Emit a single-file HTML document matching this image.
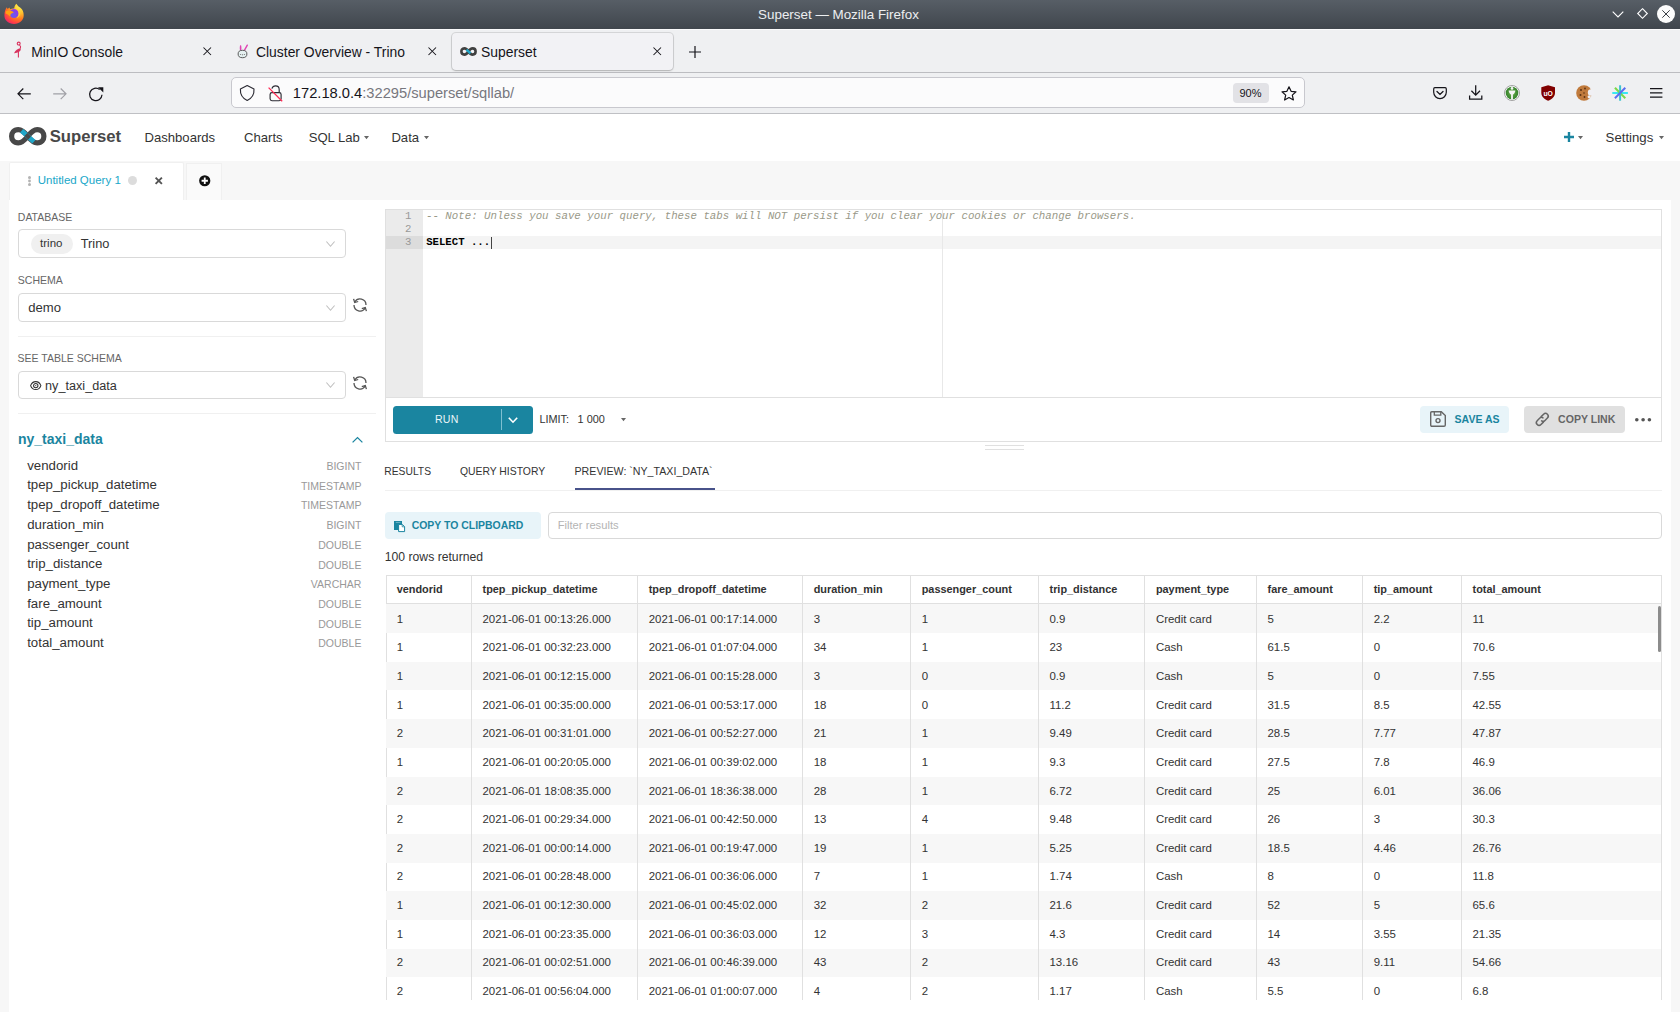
<!DOCTYPE html>
<html><head><meta charset="utf-8">
<style>
*{margin:0;padding:0;box-sizing:border-box}
html,body{width:1680px;height:1012px;overflow:hidden;background:#f7f7f7;font-family:"Liberation Sans",sans-serif;color:#333}
.t{position:absolute;white-space:nowrap}
.b{position:absolute}
svg{position:absolute;overflow:visible}
</style></head><body>
<div class="b" style="left:0px;top:0px;width:1680px;height:28.6px;background:linear-gradient(#575e66,#40464d);"></div>
<div class="t " style="left:758.10px;top:7.66px;font-size:13.4px;line-height:13.4px;color:#eceef0;">Superset — Mozilla Firefox</div>
<svg style="left:4px;top:4px" width="20" height="20"><defs><radialGradient id="ffo" cx="80%" cy="10%" r="110%"><stop offset="0" stop-color="#fff44f"/><stop offset="0.35" stop-color="#ffbd2e"/><stop offset="0.6" stop-color="#ff7a1f"/><stop offset="0.82" stop-color="#ff3b4a"/><stop offset="1" stop-color="#e01f7e"/></radialGradient><radialGradient id="ffp" cx="40%" cy="70%" r="80%"><stop offset="0" stop-color="#6a5cf0"/><stop offset="0.7" stop-color="#8a3fe8"/><stop offset="1" stop-color="#b833e1"/></radialGradient></defs>
<path d="M0.4 11.5 C0.4 7 1.8 4.8 2.8 3.3 L3.6 5 L5.4 3.6 L6.2 5.2 C7.5 4.6 9 4.4 10.3 4.6 C10.2 3 11 1.2 12.4 -0.2 C13.5 1.8 15 2.8 16.4 3.8 C18.8 5.6 19.7 8.2 19.7 11.2 C19.7 16.5 15.4 19.9 10 19.9 C4.6 19.9 0.4 16.5 0.4 11.5 Z" fill="url(#ffo)"/>
<circle cx="10.1" cy="9.5" r="4.6" fill="url(#ffp)"/><path d="M11.6 5.3 C13.5 6 14.8 7.8 14.6 10 C14.4 12 13.2 13.4 12 14 C14.5 13.8 16.5 11.5 16.3 8.8 C16.1 6.8 14.5 5.2 11.6 5.3Z" fill="#ffcf3a"/>
<path d="M1.8 7.2 C3.6 6.3 6.2 6.4 8.2 7.3 L9.9 8.5 L7.6 9.4 C6.5 10 6.2 11.3 6.5 12.6 C5 11.6 3.4 10.2 1.5 9.6 Z" fill="#ffa012"/></svg>
<svg style="left:1612px;top:11px" width="12" height="7"><path d="M0.7 0.7 L6 6 L11.3 0.7" stroke="#fff" stroke-width="1.1" fill="none"/></svg>
<svg style="left:1636.5px;top:8px" width="11" height="11"><path d="M5.5 0.7 L10.3 5.5 L5.5 10.3 L0.7 5.5 Z" stroke="#fff" stroke-width="1.1" fill="none"/></svg>
<div class="b" style="left:1657px;top:5px;width:18px;height:18px;border-radius:50%;background:#fcfcfc"></div>
<svg style="left:1662px;top:10px" width="8" height="8"><path d="M0.3 0.3 L7.7 7.7 M7.7 0.3 L0.3 7.7" stroke="#3a3f45" stroke-width="1"/></svg>
<div class="b" style="left:0px;top:28.6px;width:1680px;height:43.4px;background:#eff0f2;"></div>
<div class="b" style="left:0px;top:28.6px;width:1680px;height:1px;background:#fafafb;"></div>
<div class="b" style="left:0px;top:72px;width:1680px;height:1px;background:#bcbdc1;"></div>
<svg style="left:13px;top:41.3px" width="10" height="17"><circle cx="5.7" cy="2.6" r="1.45" stroke="#d8345f" stroke-width="1.1" fill="none"/><path d="M6.4 3.9 C7.6 5 8 6 7.4 7.2" stroke="#d8345f" stroke-width="1.1" fill="none"/><path d="M1 12.2 C2.3 9.6 4.8 7.6 7.6 7 C8.2 8.8 7.2 10.3 5.8 11.1 C4.3 11.9 2.6 12.3 1 12.2Z" fill="#d8345f"/><path d="M5.4 10.6 V16.6" stroke="#d8345f" stroke-width="1.1"/></svg>
<div class="t " style="left:31.20px;top:46.33px;font-size:13.9px;line-height:13.9px;color:#15141a;">MinIO Console</div>
<svg style="left:202.7px;top:47px" width="8.5" height="8.5"><path d="M0.5 0.5 L8 8 M8 0.5 L0.5 8" stroke="#15141a" stroke-width="1.05"/></svg>
<svg style="left:237px;top:44px" width="11" height="14"><ellipse cx="3.6" cy="3.9" rx="0.85" ry="3" fill="#e043b4"/><path d="M10.3 1.2 L7.4 6.3" stroke="#e043b4" stroke-width="1.4" stroke-linecap="round"/><ellipse cx="5.5" cy="10" rx="4.4" ry="3.7" fill="#e4f0f0" stroke="#4a4a4a" stroke-width="0.9"/><circle cx="3.7" cy="10.5" r="0.5" fill="#555"/><circle cx="5.5" cy="10.8" r="0.5" fill="#555"/><circle cx="7.3" cy="10.5" r="0.5" fill="#555"/></svg>
<div class="t " style="left:256.00px;top:46.33px;font-size:13.9px;line-height:13.9px;color:#15141a;">Cluster Overview - Trino</div>
<svg style="left:427.5px;top:47px" width="8.5" height="8.5"><path d="M0.5 0.5 L8 8 M8 0.5 L0.5 8" stroke="#15141a" stroke-width="1.05"/></svg>
<div class="b" style="left:452px;top:32.5px;width:221px;height:37px;background:#f2f2f5;border-radius:4px;box-shadow:0 0 0 1px rgba(0,0,0,0.10),0 1px 2px rgba(0,0,0,0.18)"></div>
<svg style="left:459.7px;top:47px" width="17" height="9"><path d="M4.4 1.4 C1.8 1.4 1.4 3.2 1.4 4.5 C1.4 5.8 1.8 7.6 4.4 7.6 C6.6 7.6 8.5 4.5 8.5 4.5 C8.5 4.5 10.4 1.4 12.6 1.4 C15.2 1.4 15.6 3.2 15.6 4.5 C15.6 5.8 15.2 7.6 12.6 7.6 C10.4 7.6 8.5 4.5 8.5 4.5 C8.5 4.5 6.6 1.4 4.4 1.4Z" stroke="#404040" stroke-width="2.6" fill="none"/><path d="M6.5 2.6 L10.5 6.4" stroke="#20a7c9" stroke-width="2.4"/></svg>
<div class="t " style="left:481.00px;top:46.33px;font-size:13.9px;line-height:13.9px;color:#15141a;">Superset</div>
<svg style="left:652.6px;top:47px" width="8.5" height="8.5"><path d="M0.5 0.5 L8 8 M8 0.5 L0.5 8" stroke="#15141a" stroke-width="1.05"/></svg>
<svg style="left:688.5px;top:45.8px" width="12" height="12"><path d="M6 0 V12 M0 6 H12" stroke="#15141a" stroke-width="1.2"/></svg>
<div class="b" style="left:0px;top:73px;width:1680px;height:40px;background:#eff0f2;"></div>
<div class="b" style="left:0px;top:113px;width:1680px;height:1px;background:#bfc0c4;"></div>
<svg style="left:17.2px;top:87.8px" width="14" height="11.6"><path d="M13.8 5.8 H1 M6.3 0.5 L1 5.8 L6.3 11.1" stroke="#15141a" stroke-width="1.2" fill="none"/></svg>
<svg style="left:53px;top:87.8px" width="14" height="11.6"><path d="M0.2 5.8 H13 M7.7 0.5 L13 5.8 L7.7 11.1" stroke="#a0a0a6" stroke-width="1.2" fill="none"/></svg>
<svg style="left:88.7px;top:87.2px" width="14.5" height="14"><path d="M13 7.8 A6.2 6.2 0 1 1 10.7 2.6" stroke="#15141a" stroke-width="1.25" fill="none"/><path d="M9 0.2 L14.3 0.2 L14.3 5.5 Z" fill="#15141a"/></svg>
<div class="b" style="left:231px;top:77.3px;width:1074px;height:31.2px;background:#fbfbfc;border:1px solid #c8c8ce;border-radius:5px"></div>
<svg style="left:239.6px;top:85px" width="15" height="16"><path d="M7.2 0.6 L14 3.9 C14.3 8.5 12.5 13 7.2 15.5 C1.9 13 0.1 8.5 0.4 3.9 Z" stroke="#2b2a33" stroke-width="1.15" fill="none" stroke-linejoin="round"/></svg>
<svg style="left:267.5px;top:84.5px" width="15" height="17"><path d="M3.9 3.6 C4.6 1.6 6 0.9 7.5 0.9 C9.9 0.9 11.2 2.7 11.2 4.8 V7.6" stroke="#2b2a33" stroke-width="1.15" fill="none"/><rect x="2.1" y="7.6" width="11" height="8.1" rx="1.9" stroke="#2b2a33" stroke-width="1.15" fill="none"/><path d="M0.6 2.6 L14.2 16.2" stroke="#ff2a55" stroke-width="1.3"/></svg>
<div class="t " style="left:292.85px;top:85.66px;font-size:14.7px;line-height:14.7px;color:#15141a;">172.18.0.4<span style="color:#77777e">:32295/superset/sqllab/</span></div>
<div class="b" style="left:1233.2px;top:83px;width:35.6px;height:20px;background:#e2e2e6;border-radius:4px"></div>
<div class="t " style="left:1239.50px;top:88.49px;font-size:11px;line-height:11px;color:#15141a;">90%</div>
<svg style="left:1281px;top:85.6px" width="16" height="15"><path d="M8 0.8 L10.1 5.3 L15 5.8 L11.3 9.1 L12.4 14 L8 11.5 L3.6 14 L4.7 9.1 L1 5.8 L5.9 5.3 Z" stroke="#15141a" stroke-width="1.2" fill="none" stroke-linejoin="round"/></svg>
<svg style="left:1433px;top:86.8px" width="14" height="12.4"><path d="M1.9 0.7 H12.1 Q13.3 0.7 13.3 1.9 V5.3 A6.3 6.3 0 0 1 0.7 5.3 V1.9 Q0.7 0.7 1.9 0.7Z" stroke="#15141a" stroke-width="1.2" fill="none"/><path d="M4 4.5 L7 7.4 L10 4.5" stroke="#15141a" stroke-width="1.3" fill="none" stroke-linecap="round"/></svg>
<svg style="left:1468.8px;top:85px" width="13.4" height="15"><path d="M6.7 0.3 V10 M2.4 5.8 L6.7 10.1 L11 5.8" stroke="#15141a" stroke-width="1.25" fill="none"/><path d="M0.6 10.5 V14.2 H12.8 V10.5" stroke="#15141a" stroke-width="1.25" fill="none"/></svg>
<svg style="left:1504px;top:85px" width="16" height="16"><defs><radialGradient id="gk" cx="50%" cy="50%" r="55%"><stop offset="0" stop-color="#6bb04a"/><stop offset="1" stop-color="#2f7d2a"/></radialGradient></defs><circle cx="8" cy="8" r="7.5" fill="#fff" stroke="#8a8a8a" stroke-width="0.8"/><circle cx="8" cy="8" r="6.3" fill="url(#gk)"/><circle cx="8" cy="3.4" r="1.3" fill="#f4f4f4"/><path d="M4.6 5.4 H11.4 C11.2 7.8 9.8 9 8.9 9.6 V14.2 H7.1 V9.6 C6.2 9 4.8 7.8 4.6 5.4Z" fill="#f4f4f4"/></svg>
<svg style="left:1540.7px;top:85px" width="14.3" height="15.8"><path d="M7.15 0.3 L14 2.2 V8 C14 11.8 10.6 14.4 7.15 15.7 C3.7 14.4 0.3 11.8 0.3 8 V2.2 Z" fill="#800000"/><text x="7.2" y="10.6" font-size="6.8" font-weight="bold" fill="#fff" text-anchor="middle" font-family="Liberation Sans">uO</text></svg>
<svg style="left:1575.6px;top:85px" width="16.2" height="15.8"><circle cx="8" cy="8" r="7.8" fill="#c07a3c"/><circle cx="15" cy="7.5" r="3.2" fill="#f0f0f4"/><circle cx="13.2" cy="11.8" r="1.6" fill="#f0f0f4"/><circle cx="5" cy="5" r="1" fill="#5a3214"/><circle cx="9" cy="3.5" r="0.9" fill="#5a3214"/><circle cx="4.5" cy="10" r="1" fill="#5a3214"/><circle cx="8.5" cy="12" r="0.9" fill="#5a3214"/><circle cx="8" cy="8" r="0.8" fill="#5a3214"/></svg>
<svg style="left:1612px;top:85px" width="16.2" height="16"><path d="M0.3 8 H15.9" stroke="#2ee6f2" stroke-width="1.9"/><path d="M2.9 2.8 L13.3 13.2" stroke="#7ad94a" stroke-width="2"/><path d="M8.1 0.3 V15.7" stroke="#3cc3cf" stroke-width="2"/><path d="M13.3 2.8 L2.9 13.2" stroke="#5a6ef0" stroke-width="2"/></svg>
<svg style="left:1650px;top:87.6px" width="12.4" height="9.8"><path d="M0 0.7 H12.4 M0 4.9 H12.4 M0 9.1 H12.4" stroke="#15141a" stroke-width="1.3"/></svg>
<div class="b" style="left:0px;top:114px;width:1680px;height:47px;background:#fff;"></div>
<svg style="left:9px;top:127px" width="37.5" height="18.5"><path d="M9.3 2.6 C4.6 2.6 2.6 5.8 2.6 9.25 C2.6 12.7 4.6 15.9 9.3 15.9 C13.6 15.9 16.5 12.2 18.75 9.25 C21 6.3 23.9 2.6 28.2 2.6 C32.9 2.6 34.9 5.8 34.9 9.25 C34.9 12.7 32.9 15.9 28.2 15.9 C23.9 15.9 21 12.2 18.75 9.25 C16.5 6.3 13.6 2.6 9.3 2.6 Z" stroke="#484848" stroke-width="5.2" fill="none"/><path d="M12.6 3.8 L18.75 9.25 L24.9 14.7" stroke="#20a7c9" stroke-width="4.8" fill="none"/><path d="M17.3 10.8 L20.2 7.7" stroke="#484848" stroke-width="5" fill="none"/></svg>
<div class="t " style="left:49.70px;top:129.26px;font-size:16.7px;line-height:16.7px;color:#484848;font-weight:bold;">Superset</div>
<div class="t " style="left:144.50px;top:131.31px;font-size:13.1px;line-height:13.1px;color:#333;">Dashboards</div>
<div class="t " style="left:244.10px;top:131.31px;font-size:13.1px;line-height:13.1px;color:#333;">Charts</div>
<div class="t " style="left:308.70px;top:131.31px;font-size:13.1px;line-height:13.1px;color:#333;">SQL Lab</div>
<div class="t " style="left:391.40px;top:131.31px;font-size:13.1px;line-height:13.1px;color:#333;">Data</div>
<svg style="left:364.4px;top:136.2px" width="5" height="3.2"><path d="M0 0 H5 L2.5 3.2Z" fill="#666"/></svg>
<svg style="left:424.3px;top:136.2px" width="5" height="3.2"><path d="M0 0 H5 L2.5 3.2Z" fill="#666"/></svg>
<svg style="left:1564px;top:132px" width="10" height="10"><path d="M5 0 V10 M0 5 H10" stroke="#1a85a0" stroke-width="2.4"/></svg>
<svg style="left:1578px;top:136.2px" width="5" height="3.2"><path d="M0 0 H5 L2.5 3.2Z" fill="#666"/></svg>
<div class="t " style="left:1605.60px;top:131.23px;font-size:13.2px;line-height:13.2px;color:#333;">Settings</div>
<svg style="left:1659px;top:136.2px" width="5" height="3.2"><path d="M0 0 H5 L2.5 3.2Z" fill="#666"/></svg>
<div class="b" style="left:9px;top:162px;width:174.5px;height:38px;background:#fff;border:1px solid #f0f0f0;border-bottom:none;border-radius:2px 2px 0 0"></div>
<svg style="left:27px;top:175.6px" width="4" height="10"><circle cx="2.5" cy="1.5" r="1.5" fill="#b3b3b3"/><circle cx="2.5" cy="5" r="1.4" fill="#b3b3b3"/><circle cx="2.5" cy="8.5" r="1.5" fill="#b3b3b3"/></svg>
<div class="t " style="left:37.70px;top:174.87px;font-size:11.5px;line-height:11.5px;color:#20a7c9;">Untitled Query 1</div>
<div class="b" style="left:128px;top:176px;width:9px;height:9px;border-radius:50%;background:#dcdcdc"></div>
<svg style="left:155px;top:177px" width="7.5" height="7.5"><path d="M0.6 0.6 L6.9 6.9 M6.9 0.6 L0.6 6.9" stroke="#555" stroke-width="1.9"/></svg>
<div class="b" style="left:186px;top:162.8px;width:35.5px;height:37.2px;background:#fafafa;border:1px solid #f0f0f0;border-bottom:none"></div>
<svg style="left:198.5px;top:174.5px" width="11.5" height="11.5"><circle cx="5.75" cy="5.75" r="5.6" fill="#111"/><path d="M5.75 2.6 V8.9 M2.6 5.75 H8.9" stroke="#fff" stroke-width="1.8"/></svg>
<div class="b" style="left:9px;top:200px;width:1662px;height:812px;background:#fff;"></div>
<div class="t " style="left:17.80px;top:212.01px;font-size:10.5px;line-height:10.5px;color:#666;">DATABASE</div>
<div class="b" style="left:18.4px;top:229.2px;width:327.4px;height:28.4px;background:#fff;border:1px solid #d9d9d9;border-radius:4px"></div>
<div class="b" style="left:31.1px;top:234px;width:41.6px;height:19.8px;background:#f0f0f0;border-radius:10px"></div>
<div class="t " style="left:40.10px;top:237.87px;font-size:11.5px;line-height:11.5px;color:#333;">trino</div>
<div class="t " style="left:80.70px;top:237.96px;font-size:12.8px;line-height:12.8px;color:#333;">Trino</div>
<svg style="left:325.5px;top:240.9px" width="9" height="6"><path d="M0.4 0.5 L4.5 5.3 L8.6 0.5" stroke="#bfbfbf" stroke-width="1.05" fill="none"/></svg>
<div class="t " style="left:17.80px;top:275.01px;font-size:10.5px;line-height:10.5px;color:#666;">SCHEMA</div>
<div class="b" style="left:18.4px;top:293.4px;width:327.4px;height:28.4px;background:#fff;border:1px solid #d9d9d9;border-radius:4px"></div>
<div class="t " style="left:28.20px;top:300.71px;font-size:13.1px;line-height:13.1px;color:#333;">demo</div>
<svg style="left:325.5px;top:304.9px" width="9" height="6"><path d="M0.4 0.5 L4.5 5.3 L8.6 0.5" stroke="#bfbfbf" stroke-width="1.05" fill="none"/></svg>
<svg style="left:351.5px;top:297.2px" width="16" height="16"><path d="M2.8 5.0 A6 6 0 0 1 14 8" stroke="#555" stroke-width="1.3" fill="none"/><path d="M2 8 A6 6 0 0 0 13.2 11" stroke="#555" stroke-width="1.3" fill="none"/><path d="M1.6 1.9 L2.7 5.5 L6.2 4.5" stroke="#555" stroke-width="1.3" fill="none"/><path d="M9.8 11.6 L13.3 10.6 L14.4 14.1" stroke="#555" stroke-width="1.3" fill="none"/></svg>
<div class="b" style="left:18px;top:336px;width:358px;height:1px;background:#f0f0f0;"></div>
<div class="t " style="left:17.60px;top:353.11px;font-size:10.5px;line-height:10.5px;color:#666;">SEE TABLE SCHEMA</div>
<div class="b" style="left:18.4px;top:371.3px;width:327.4px;height:27.4px;background:#fff;border:1px solid #d9d9d9;border-radius:4px"></div>
<svg style="left:29.6px;top:380.6px" width="11.5" height="9.5"><path d="M0.6 4.6 C2.6 -0.7 8.9 -0.7 10.9 4.6 C8.9 9.9 2.6 9.9 0.6 4.6Z" stroke="#333" stroke-width="1.05" fill="none"/><circle cx="5.75" cy="4.6" r="2.2" stroke="#333" stroke-width="1.05" fill="none"/><circle cx="5.75" cy="4.6" r="0.6" fill="#333"/></svg>
<div class="t " style="left:45.10px;top:379.69px;font-size:12.65px;line-height:12.65px;color:#333;">ny_taxi_data</div>
<svg style="left:325.5px;top:382.4px" width="9" height="6"><path d="M0.4 0.5 L4.5 5.3 L8.6 0.5" stroke="#bfbfbf" stroke-width="1.05" fill="none"/></svg>
<svg style="left:351.5px;top:375.2px" width="16" height="16"><path d="M2.8 5.0 A6 6 0 0 1 14 8" stroke="#555" stroke-width="1.3" fill="none"/><path d="M2 8 A6 6 0 0 0 13.2 11" stroke="#555" stroke-width="1.3" fill="none"/><path d="M1.6 1.9 L2.7 5.5 L6.2 4.5" stroke="#555" stroke-width="1.3" fill="none"/><path d="M9.8 11.6 L13.3 10.6 L14.4 14.1" stroke="#555" stroke-width="1.3" fill="none"/></svg>
<div class="b" style="left:18px;top:413px;width:358px;height:1px;background:#f0f0f0;"></div>
<div class="t " style="left:18.00px;top:432.05px;font-size:14.0px;line-height:14.0px;color:#1a85a0;font-weight:bold;">ny_taxi_data</div>
<svg style="left:351.5px;top:436.5px" width="11" height="6"><path d="M0.6 5.4 L5.5 0.6 L10.4 5.4" stroke="#1a85a0" stroke-width="1.3" fill="none"/></svg>
<div class="t " style="left:27.20px;top:458.78px;font-size:13.25px;line-height:13.25px;color:#333;">vendorid</div>
<div class="t" style="left:161.4px;width:200px;text-align:right;top:461.11px;font-size:10.5px;line-height:10.5px;color:#999">BIGINT</div>
<div class="t " style="left:27.20px;top:478.46px;font-size:13.25px;line-height:13.25px;color:#333;">tpep_pickup_datetime</div>
<div class="t" style="left:161.4px;width:200px;text-align:right;top:480.79px;font-size:10.5px;line-height:10.5px;color:#999">TIMESTAMP</div>
<div class="t " style="left:27.20px;top:498.14px;font-size:13.25px;line-height:13.25px;color:#333;">tpep_dropoff_datetime</div>
<div class="t" style="left:161.4px;width:200px;text-align:right;top:500.47px;font-size:10.5px;line-height:10.5px;color:#999">TIMESTAMP</div>
<div class="t " style="left:27.20px;top:517.82px;font-size:13.25px;line-height:13.25px;color:#333;">duration_min</div>
<div class="t" style="left:161.4px;width:200px;text-align:right;top:520.15px;font-size:10.5px;line-height:10.5px;color:#999">BIGINT</div>
<div class="t " style="left:27.20px;top:537.50px;font-size:13.25px;line-height:13.25px;color:#333;">passenger_count</div>
<div class="t" style="left:161.4px;width:200px;text-align:right;top:539.83px;font-size:10.5px;line-height:10.5px;color:#999">DOUBLE</div>
<div class="t " style="left:27.20px;top:557.18px;font-size:13.25px;line-height:13.25px;color:#333;">trip_distance</div>
<div class="t" style="left:161.4px;width:200px;text-align:right;top:559.51px;font-size:10.5px;line-height:10.5px;color:#999">DOUBLE</div>
<div class="t " style="left:27.20px;top:576.86px;font-size:13.25px;line-height:13.25px;color:#333;">payment_type</div>
<div class="t" style="left:161.4px;width:200px;text-align:right;top:579.19px;font-size:10.5px;line-height:10.5px;color:#999">VARCHAR</div>
<div class="t " style="left:27.20px;top:596.54px;font-size:13.25px;line-height:13.25px;color:#333;">fare_amount</div>
<div class="t" style="left:161.4px;width:200px;text-align:right;top:598.87px;font-size:10.5px;line-height:10.5px;color:#999">DOUBLE</div>
<div class="t " style="left:27.20px;top:616.22px;font-size:13.25px;line-height:13.25px;color:#333;">tip_amount</div>
<div class="t" style="left:161.4px;width:200px;text-align:right;top:618.55px;font-size:10.5px;line-height:10.5px;color:#999">DOUBLE</div>
<div class="t " style="left:27.20px;top:635.90px;font-size:13.25px;line-height:13.25px;color:#333;">total_amount</div>
<div class="t" style="left:161.4px;width:200px;text-align:right;top:638.23px;font-size:10.5px;line-height:10.5px;color:#999">DOUBLE</div>
<div class="b" style="left:385px;top:209px;width:1277px;height:189px;background:#fff;border:1px solid #e0e0e0;border-bottom:none"></div>
<div class="b" style="left:385.5px;top:209.5px;width:37.5px;height:188px;background:#ebebeb;"></div>
<div class="b" style="left:385.5px;top:236.3px;width:37.5px;height:12.4px;background:#dcdcdc;"></div>
<div class="b" style="left:423px;top:236.3px;width:1238px;height:12.4px;background:#f4f4f4;"></div>
<div class="b" style="left:942px;top:210px;width:1px;height:187px;background:#e8e8e8;"></div>
<div class="t" style="left:385px;width:26.5px;text-align:right;top:210.73px;font-size:10.66px;line-height:10.66px;color:#999;font-family:'Liberation Mono',monospace">1</div>
<div class="t" style="left:385px;width:26.5px;text-align:right;top:223.68px;font-size:10.66px;line-height:10.66px;color:#999;font-family:'Liberation Mono',monospace">2</div>
<div class="t" style="left:385px;width:26.5px;text-align:right;top:236.63px;font-size:10.66px;line-height:10.66px;color:#999;font-family:'Liberation Mono',monospace">3</div>
<div class="t " style="left:426.00px;top:210.64px;font-size:10.76px;line-height:10.76px;color:#999988;font-family:'Liberation Mono',monospace;font-style:italic;">-- Note: Unless you save your query, these tabs will NOT persist if you clear your cookies or change browsers.</div>
<div class="t " style="left:426.20px;top:236.78px;font-size:10.66px;line-height:10.66px;color:#000;font-family:'Liberation Mono',monospace;font-weight:bold;">SELECT ...</div>
<div class="b" style="left:491px;top:236.5px;width:1px;height:12.2px;background:#444;"></div>
<div class="b" style="left:385px;top:397px;width:1277px;height:45px;background:#fff;border:1px solid #e0e0e0"></div>
<div class="b" style="left:393px;top:406px;width:140px;height:27.7px;background:#1a85a0;border-radius:3.5px"></div>
<div class="b" style="left:501px;top:409px;width:1px;height:21px;background:#7fbfd0;"></div>
<div class="t " style="left:435.00px;top:414.23px;font-size:10.6px;line-height:10.6px;color:#eaf5f8;letter-spacing:0.2px;">RUN</div>
<svg style="left:508px;top:417px" width="10" height="6.2"><path d="M0.8 0.8 L5 5.2 L9.2 0.8" stroke="#fff" stroke-width="1.6" fill="none"/></svg>
<div class="t " style="left:539.40px;top:413.97px;font-size:10.9px;line-height:10.9px;color:#333;">LIMIT:</div>
<div class="t " style="left:577.60px;top:413.97px;font-size:10.9px;line-height:10.9px;color:#333;">1 000</div>
<svg style="left:621px;top:418.2px" width="5" height="3.2"><path d="M0 0 H5 L2.5 3.2Z" fill="#666"/></svg>
<div class="b" style="left:1420px;top:406px;width:89px;height:26.6px;background:#e8f4f9;border-radius:4px"></div>
<svg style="left:1430.4px;top:411.3px" width="16" height="16"><path d="M1.8 0.7 H11.3 L15.3 4.5 V14 Q15.3 15.3 14 15.3 H2 Q0.7 15.3 0.7 14 V2 Q0.7 0.7 1.8 0.7Z" stroke="#666" stroke-width="1.4" fill="none"/><path d="M4.3 0.9 V4.2 H10.8 V0.9" stroke="#666" stroke-width="1.3" fill="none"/><circle cx="8" cy="9.6" r="2" stroke="#666" stroke-width="1.4" fill="none"/></svg>
<div class="t " style="left:1454.60px;top:414.31px;font-size:10.5px;line-height:10.5px;color:#1a85a0;font-weight:bold;">SAVE AS</div>
<div class="b" style="left:1524px;top:406px;width:101px;height:26.6px;background:#e0e0e0;border-radius:4px"></div>
<svg style="left:1535px;top:412px" width="14.6" height="14.7"><path d="M6.2 4.6 L8.6 2.2 A2.6 2.6 0 0 1 12.4 6 L10 8.4 A2.6 2.6 0 0 1 6.6 8.8" stroke="#666" stroke-width="1.5" fill="none" stroke-linecap="round"/><path d="M8.4 10.1 L6 12.5 A2.6 2.6 0 0 1 2.2 8.7 L4.6 6.3 A2.6 2.6 0 0 1 8 5.9" stroke="#666" stroke-width="1.5" fill="none" stroke-linecap="round"/></svg>
<div class="t " style="left:1558.10px;top:414.27px;font-size:10.55px;line-height:10.55px;color:#666;font-weight:bold;">COPY LINK</div>
<svg style="left:1634.8px;top:417.7px" width="16.2" height="3.6"><circle cx="1.8" cy="1.8" r="1.8" fill="#555"/><circle cx="8.1" cy="1.8" r="1.8" fill="#555"/><circle cx="14.4" cy="1.8" r="1.8" fill="#555"/></svg>
<div class="b" style="left:985px;top:445px;width:39px;height:1.2px;background:#e0e0e0;"></div>
<div class="b" style="left:985px;top:449px;width:39px;height:1.2px;background:#e0e0e0;"></div>
<div class="b" style="left:385px;top:490px;width:1277px;height:1px;background:#f0f0f0;"></div>
<div class="t " style="left:384.30px;top:466.68px;font-size:10.3px;line-height:10.3px;color:#333;">RESULTS</div>
<div class="t " style="left:459.90px;top:466.60px;font-size:10.4px;line-height:10.4px;color:#333;">QUERY HISTORY</div>
<div class="t " style="left:574.50px;top:466.38px;font-size:10.65px;line-height:10.65px;color:#333;">PREVIEW: `NY_TAXI_DATA`</div>
<div class="b" style="left:575px;top:488.2px;width:140px;height:1.8px;background:#48528a;"></div>
<div class="b" style="left:385px;top:512px;width:156px;height:26.6px;background:#e8f4f9;border-radius:4px"></div>
<svg style="left:394px;top:520.9px" width="11" height="11.2"><rect x="0" y="0" width="8" height="9" fill="#1a85a0"/><rect x="1.8" y="0.9" width="4.6" height="1" fill="#6fb3c6"/><path d="M4.6 3.4 H8.3 L10.6 5.7 V10.6 H4.6 Z" stroke="#1a85a0" stroke-width="1" fill="#fff"/><path d="M8.2 3.5 V5.8 H10.5" stroke="#1a85a0" stroke-width="0.8" fill="none"/></svg>
<div class="t " style="left:411.70px;top:520.95px;font-size:10.46px;line-height:10.46px;color:#1a85a0;font-weight:bold;">COPY TO CLIPBOARD</div>
<div class="b" style="left:548px;top:512px;width:1114px;height:27px;background:#fff;border:1px solid #d9d9d9;border-radius:4px"></div>
<div class="t " style="left:557.70px;top:519.52px;font-size:11.2px;line-height:11.2px;color:#b4b4b4;">Filter results</div>
<div class="t " style="left:384.80px;top:551.17px;font-size:12.2px;line-height:12.2px;color:#333;">100 rows returned</div>
<div class="b" style="left:385.5px;top:575.3px;width:1276px;height:425px;background:#fff;border:1px solid #e0e0e0;border-bottom:none"></div>
<div class="b" style="left:386px;top:603.3px;width:1275px;height:1.8px;background:#e0e0e0;"></div>
<div class="b" style="left:386px;top:604.3px;width:1275px;height:28.7px;background:#f7f7f7;"></div>
<div class="b" style="left:386px;top:661.7px;width:1275px;height:28.7px;background:#f7f7f7;"></div>
<div class="b" style="left:386px;top:719.1px;width:1275px;height:28.7px;background:#f7f7f7;"></div>
<div class="b" style="left:386px;top:776.5px;width:1275px;height:28.7px;background:#f7f7f7;"></div>
<div class="b" style="left:386px;top:833.9px;width:1275px;height:28.7px;background:#f7f7f7;"></div>
<div class="b" style="left:386px;top:891.3px;width:1275px;height:28.7px;background:#f7f7f7;"></div>
<div class="b" style="left:386px;top:948.7px;width:1275px;height:28.7px;background:#f7f7f7;"></div>
<div class="b" style="left:470.8px;top:576px;width:1px;height:424px;background:#e0e0e0;"></div>
<div class="b" style="left:637.0px;top:576px;width:1px;height:424px;background:#e0e0e0;"></div>
<div class="b" style="left:802.0px;top:576px;width:1px;height:424px;background:#e0e0e0;"></div>
<div class="b" style="left:910.0px;top:576px;width:1px;height:424px;background:#e0e0e0;"></div>
<div class="b" style="left:1037.8px;top:576px;width:1px;height:424px;background:#e0e0e0;"></div>
<div class="b" style="left:1144.2px;top:576px;width:1px;height:424px;background:#e0e0e0;"></div>
<div class="b" style="left:1255.8px;top:576px;width:1px;height:424px;background:#e0e0e0;"></div>
<div class="b" style="left:1362.0px;top:576px;width:1px;height:424px;background:#e0e0e0;"></div>
<div class="b" style="left:1460.8px;top:576px;width:1px;height:424px;background:#e0e0e0;"></div>
<div class="t " style="left:396.70px;top:584.07px;font-size:10.9px;line-height:10.9px;color:#323232;font-weight:bold;">vendorid</div>
<div class="t " style="left:482.50px;top:584.07px;font-size:10.9px;line-height:10.9px;color:#323232;font-weight:bold;">tpep_pickup_datetime</div>
<div class="t " style="left:648.70px;top:584.07px;font-size:10.9px;line-height:10.9px;color:#323232;font-weight:bold;">tpep_dropoff_datetime</div>
<div class="t " style="left:813.70px;top:584.07px;font-size:10.9px;line-height:10.9px;color:#323232;font-weight:bold;">duration_min</div>
<div class="t " style="left:921.70px;top:584.07px;font-size:10.9px;line-height:10.9px;color:#323232;font-weight:bold;">passenger_count</div>
<div class="t " style="left:1049.50px;top:584.07px;font-size:10.9px;line-height:10.9px;color:#323232;font-weight:bold;">trip_distance</div>
<div class="t " style="left:1155.90px;top:584.07px;font-size:10.9px;line-height:10.9px;color:#323232;font-weight:bold;">payment_type</div>
<div class="t " style="left:1267.50px;top:584.07px;font-size:10.9px;line-height:10.9px;color:#323232;font-weight:bold;">fare_amount</div>
<div class="t " style="left:1373.70px;top:584.07px;font-size:10.9px;line-height:10.9px;color:#323232;font-weight:bold;">tip_amount</div>
<div class="t " style="left:1472.50px;top:584.07px;font-size:10.9px;line-height:10.9px;color:#323232;font-weight:bold;">total_amount</div>
<div class="t " style="left:396.70px;top:613.81px;font-size:11.45px;line-height:11.45px;color:#333;">1</div>
<div class="t " style="left:482.50px;top:613.81px;font-size:11.45px;line-height:11.45px;color:#333;">2021-06-01 00:13:26.000</div>
<div class="t " style="left:648.70px;top:613.81px;font-size:11.45px;line-height:11.45px;color:#333;">2021-06-01 00:17:14.000</div>
<div class="t " style="left:813.70px;top:613.81px;font-size:11.45px;line-height:11.45px;color:#333;">3</div>
<div class="t " style="left:921.70px;top:613.81px;font-size:11.45px;line-height:11.45px;color:#333;">1</div>
<div class="t " style="left:1049.50px;top:613.81px;font-size:11.45px;line-height:11.45px;color:#333;">0.9</div>
<div class="t " style="left:1155.90px;top:613.81px;font-size:11.45px;line-height:11.45px;color:#333;">Credit card</div>
<div class="t " style="left:1267.50px;top:613.81px;font-size:11.45px;line-height:11.45px;color:#333;">5</div>
<div class="t " style="left:1373.70px;top:613.81px;font-size:11.45px;line-height:11.45px;color:#333;">2.2</div>
<div class="t " style="left:1472.50px;top:613.81px;font-size:11.45px;line-height:11.45px;color:#333;">11</div>
<div class="t " style="left:396.70px;top:642.44px;font-size:11.45px;line-height:11.45px;color:#333;">1</div>
<div class="t " style="left:482.50px;top:642.44px;font-size:11.45px;line-height:11.45px;color:#333;">2021-06-01 00:32:23.000</div>
<div class="t " style="left:648.70px;top:642.44px;font-size:11.45px;line-height:11.45px;color:#333;">2021-06-01 01:07:04.000</div>
<div class="t " style="left:813.70px;top:642.44px;font-size:11.45px;line-height:11.45px;color:#333;">34</div>
<div class="t " style="left:921.70px;top:642.44px;font-size:11.45px;line-height:11.45px;color:#333;">1</div>
<div class="t " style="left:1049.50px;top:642.44px;font-size:11.45px;line-height:11.45px;color:#333;">23</div>
<div class="t " style="left:1155.90px;top:642.44px;font-size:11.45px;line-height:11.45px;color:#333;">Cash</div>
<div class="t " style="left:1267.50px;top:642.44px;font-size:11.45px;line-height:11.45px;color:#333;">61.5</div>
<div class="t " style="left:1373.70px;top:642.44px;font-size:11.45px;line-height:11.45px;color:#333;">0</div>
<div class="t " style="left:1472.50px;top:642.44px;font-size:11.45px;line-height:11.45px;color:#333;">70.6</div>
<div class="t " style="left:396.70px;top:671.07px;font-size:11.45px;line-height:11.45px;color:#333;">1</div>
<div class="t " style="left:482.50px;top:671.07px;font-size:11.45px;line-height:11.45px;color:#333;">2021-06-01 00:12:15.000</div>
<div class="t " style="left:648.70px;top:671.07px;font-size:11.45px;line-height:11.45px;color:#333;">2021-06-01 00:15:28.000</div>
<div class="t " style="left:813.70px;top:671.07px;font-size:11.45px;line-height:11.45px;color:#333;">3</div>
<div class="t " style="left:921.70px;top:671.07px;font-size:11.45px;line-height:11.45px;color:#333;">0</div>
<div class="t " style="left:1049.50px;top:671.07px;font-size:11.45px;line-height:11.45px;color:#333;">0.9</div>
<div class="t " style="left:1155.90px;top:671.07px;font-size:11.45px;line-height:11.45px;color:#333;">Cash</div>
<div class="t " style="left:1267.50px;top:671.07px;font-size:11.45px;line-height:11.45px;color:#333;">5</div>
<div class="t " style="left:1373.70px;top:671.07px;font-size:11.45px;line-height:11.45px;color:#333;">0</div>
<div class="t " style="left:1472.50px;top:671.07px;font-size:11.45px;line-height:11.45px;color:#333;">7.55</div>
<div class="t " style="left:396.70px;top:699.70px;font-size:11.45px;line-height:11.45px;color:#333;">1</div>
<div class="t " style="left:482.50px;top:699.70px;font-size:11.45px;line-height:11.45px;color:#333;">2021-06-01 00:35:00.000</div>
<div class="t " style="left:648.70px;top:699.70px;font-size:11.45px;line-height:11.45px;color:#333;">2021-06-01 00:53:17.000</div>
<div class="t " style="left:813.70px;top:699.70px;font-size:11.45px;line-height:11.45px;color:#333;">18</div>
<div class="t " style="left:921.70px;top:699.70px;font-size:11.45px;line-height:11.45px;color:#333;">0</div>
<div class="t " style="left:1049.50px;top:699.70px;font-size:11.45px;line-height:11.45px;color:#333;">11.2</div>
<div class="t " style="left:1155.90px;top:699.70px;font-size:11.45px;line-height:11.45px;color:#333;">Credit card</div>
<div class="t " style="left:1267.50px;top:699.70px;font-size:11.45px;line-height:11.45px;color:#333;">31.5</div>
<div class="t " style="left:1373.70px;top:699.70px;font-size:11.45px;line-height:11.45px;color:#333;">8.5</div>
<div class="t " style="left:1472.50px;top:699.70px;font-size:11.45px;line-height:11.45px;color:#333;">42.55</div>
<div class="t " style="left:396.70px;top:728.33px;font-size:11.45px;line-height:11.45px;color:#333;">2</div>
<div class="t " style="left:482.50px;top:728.33px;font-size:11.45px;line-height:11.45px;color:#333;">2021-06-01 00:31:01.000</div>
<div class="t " style="left:648.70px;top:728.33px;font-size:11.45px;line-height:11.45px;color:#333;">2021-06-01 00:52:27.000</div>
<div class="t " style="left:813.70px;top:728.33px;font-size:11.45px;line-height:11.45px;color:#333;">21</div>
<div class="t " style="left:921.70px;top:728.33px;font-size:11.45px;line-height:11.45px;color:#333;">1</div>
<div class="t " style="left:1049.50px;top:728.33px;font-size:11.45px;line-height:11.45px;color:#333;">9.49</div>
<div class="t " style="left:1155.90px;top:728.33px;font-size:11.45px;line-height:11.45px;color:#333;">Credit card</div>
<div class="t " style="left:1267.50px;top:728.33px;font-size:11.45px;line-height:11.45px;color:#333;">28.5</div>
<div class="t " style="left:1373.70px;top:728.33px;font-size:11.45px;line-height:11.45px;color:#333;">7.77</div>
<div class="t " style="left:1472.50px;top:728.33px;font-size:11.45px;line-height:11.45px;color:#333;">47.87</div>
<div class="t " style="left:396.70px;top:756.96px;font-size:11.45px;line-height:11.45px;color:#333;">1</div>
<div class="t " style="left:482.50px;top:756.96px;font-size:11.45px;line-height:11.45px;color:#333;">2021-06-01 00:20:05.000</div>
<div class="t " style="left:648.70px;top:756.96px;font-size:11.45px;line-height:11.45px;color:#333;">2021-06-01 00:39:02.000</div>
<div class="t " style="left:813.70px;top:756.96px;font-size:11.45px;line-height:11.45px;color:#333;">18</div>
<div class="t " style="left:921.70px;top:756.96px;font-size:11.45px;line-height:11.45px;color:#333;">1</div>
<div class="t " style="left:1049.50px;top:756.96px;font-size:11.45px;line-height:11.45px;color:#333;">9.3</div>
<div class="t " style="left:1155.90px;top:756.96px;font-size:11.45px;line-height:11.45px;color:#333;">Credit card</div>
<div class="t " style="left:1267.50px;top:756.96px;font-size:11.45px;line-height:11.45px;color:#333;">27.5</div>
<div class="t " style="left:1373.70px;top:756.96px;font-size:11.45px;line-height:11.45px;color:#333;">7.8</div>
<div class="t " style="left:1472.50px;top:756.96px;font-size:11.45px;line-height:11.45px;color:#333;">46.9</div>
<div class="t " style="left:396.70px;top:785.59px;font-size:11.45px;line-height:11.45px;color:#333;">2</div>
<div class="t " style="left:482.50px;top:785.59px;font-size:11.45px;line-height:11.45px;color:#333;">2021-06-01 18:08:35.000</div>
<div class="t " style="left:648.70px;top:785.59px;font-size:11.45px;line-height:11.45px;color:#333;">2021-06-01 18:36:38.000</div>
<div class="t " style="left:813.70px;top:785.59px;font-size:11.45px;line-height:11.45px;color:#333;">28</div>
<div class="t " style="left:921.70px;top:785.59px;font-size:11.45px;line-height:11.45px;color:#333;">1</div>
<div class="t " style="left:1049.50px;top:785.59px;font-size:11.45px;line-height:11.45px;color:#333;">6.72</div>
<div class="t " style="left:1155.90px;top:785.59px;font-size:11.45px;line-height:11.45px;color:#333;">Credit card</div>
<div class="t " style="left:1267.50px;top:785.59px;font-size:11.45px;line-height:11.45px;color:#333;">25</div>
<div class="t " style="left:1373.70px;top:785.59px;font-size:11.45px;line-height:11.45px;color:#333;">6.01</div>
<div class="t " style="left:1472.50px;top:785.59px;font-size:11.45px;line-height:11.45px;color:#333;">36.06</div>
<div class="t " style="left:396.70px;top:814.22px;font-size:11.45px;line-height:11.45px;color:#333;">2</div>
<div class="t " style="left:482.50px;top:814.22px;font-size:11.45px;line-height:11.45px;color:#333;">2021-06-01 00:29:34.000</div>
<div class="t " style="left:648.70px;top:814.22px;font-size:11.45px;line-height:11.45px;color:#333;">2021-06-01 00:42:50.000</div>
<div class="t " style="left:813.70px;top:814.22px;font-size:11.45px;line-height:11.45px;color:#333;">13</div>
<div class="t " style="left:921.70px;top:814.22px;font-size:11.45px;line-height:11.45px;color:#333;">4</div>
<div class="t " style="left:1049.50px;top:814.22px;font-size:11.45px;line-height:11.45px;color:#333;">9.48</div>
<div class="t " style="left:1155.90px;top:814.22px;font-size:11.45px;line-height:11.45px;color:#333;">Credit card</div>
<div class="t " style="left:1267.50px;top:814.22px;font-size:11.45px;line-height:11.45px;color:#333;">26</div>
<div class="t " style="left:1373.70px;top:814.22px;font-size:11.45px;line-height:11.45px;color:#333;">3</div>
<div class="t " style="left:1472.50px;top:814.22px;font-size:11.45px;line-height:11.45px;color:#333;">30.3</div>
<div class="t " style="left:396.70px;top:842.85px;font-size:11.45px;line-height:11.45px;color:#333;">2</div>
<div class="t " style="left:482.50px;top:842.85px;font-size:11.45px;line-height:11.45px;color:#333;">2021-06-01 00:00:14.000</div>
<div class="t " style="left:648.70px;top:842.85px;font-size:11.45px;line-height:11.45px;color:#333;">2021-06-01 00:19:47.000</div>
<div class="t " style="left:813.70px;top:842.85px;font-size:11.45px;line-height:11.45px;color:#333;">19</div>
<div class="t " style="left:921.70px;top:842.85px;font-size:11.45px;line-height:11.45px;color:#333;">1</div>
<div class="t " style="left:1049.50px;top:842.85px;font-size:11.45px;line-height:11.45px;color:#333;">5.25</div>
<div class="t " style="left:1155.90px;top:842.85px;font-size:11.45px;line-height:11.45px;color:#333;">Credit card</div>
<div class="t " style="left:1267.50px;top:842.85px;font-size:11.45px;line-height:11.45px;color:#333;">18.5</div>
<div class="t " style="left:1373.70px;top:842.85px;font-size:11.45px;line-height:11.45px;color:#333;">4.46</div>
<div class="t " style="left:1472.50px;top:842.85px;font-size:11.45px;line-height:11.45px;color:#333;">26.76</div>
<div class="t " style="left:396.70px;top:871.48px;font-size:11.45px;line-height:11.45px;color:#333;">2</div>
<div class="t " style="left:482.50px;top:871.48px;font-size:11.45px;line-height:11.45px;color:#333;">2021-06-01 00:28:48.000</div>
<div class="t " style="left:648.70px;top:871.48px;font-size:11.45px;line-height:11.45px;color:#333;">2021-06-01 00:36:06.000</div>
<div class="t " style="left:813.70px;top:871.48px;font-size:11.45px;line-height:11.45px;color:#333;">7</div>
<div class="t " style="left:921.70px;top:871.48px;font-size:11.45px;line-height:11.45px;color:#333;">1</div>
<div class="t " style="left:1049.50px;top:871.48px;font-size:11.45px;line-height:11.45px;color:#333;">1.74</div>
<div class="t " style="left:1155.90px;top:871.48px;font-size:11.45px;line-height:11.45px;color:#333;">Cash</div>
<div class="t " style="left:1267.50px;top:871.48px;font-size:11.45px;line-height:11.45px;color:#333;">8</div>
<div class="t " style="left:1373.70px;top:871.48px;font-size:11.45px;line-height:11.45px;color:#333;">0</div>
<div class="t " style="left:1472.50px;top:871.48px;font-size:11.45px;line-height:11.45px;color:#333;">11.8</div>
<div class="t " style="left:396.70px;top:900.11px;font-size:11.45px;line-height:11.45px;color:#333;">1</div>
<div class="t " style="left:482.50px;top:900.11px;font-size:11.45px;line-height:11.45px;color:#333;">2021-06-01 00:12:30.000</div>
<div class="t " style="left:648.70px;top:900.11px;font-size:11.45px;line-height:11.45px;color:#333;">2021-06-01 00:45:02.000</div>
<div class="t " style="left:813.70px;top:900.11px;font-size:11.45px;line-height:11.45px;color:#333;">32</div>
<div class="t " style="left:921.70px;top:900.11px;font-size:11.45px;line-height:11.45px;color:#333;">2</div>
<div class="t " style="left:1049.50px;top:900.11px;font-size:11.45px;line-height:11.45px;color:#333;">21.6</div>
<div class="t " style="left:1155.90px;top:900.11px;font-size:11.45px;line-height:11.45px;color:#333;">Credit card</div>
<div class="t " style="left:1267.50px;top:900.11px;font-size:11.45px;line-height:11.45px;color:#333;">52</div>
<div class="t " style="left:1373.70px;top:900.11px;font-size:11.45px;line-height:11.45px;color:#333;">5</div>
<div class="t " style="left:1472.50px;top:900.11px;font-size:11.45px;line-height:11.45px;color:#333;">65.6</div>
<div class="t " style="left:396.70px;top:928.74px;font-size:11.45px;line-height:11.45px;color:#333;">1</div>
<div class="t " style="left:482.50px;top:928.74px;font-size:11.45px;line-height:11.45px;color:#333;">2021-06-01 00:23:35.000</div>
<div class="t " style="left:648.70px;top:928.74px;font-size:11.45px;line-height:11.45px;color:#333;">2021-06-01 00:36:03.000</div>
<div class="t " style="left:813.70px;top:928.74px;font-size:11.45px;line-height:11.45px;color:#333;">12</div>
<div class="t " style="left:921.70px;top:928.74px;font-size:11.45px;line-height:11.45px;color:#333;">3</div>
<div class="t " style="left:1049.50px;top:928.74px;font-size:11.45px;line-height:11.45px;color:#333;">4.3</div>
<div class="t " style="left:1155.90px;top:928.74px;font-size:11.45px;line-height:11.45px;color:#333;">Credit card</div>
<div class="t " style="left:1267.50px;top:928.74px;font-size:11.45px;line-height:11.45px;color:#333;">14</div>
<div class="t " style="left:1373.70px;top:928.74px;font-size:11.45px;line-height:11.45px;color:#333;">3.55</div>
<div class="t " style="left:1472.50px;top:928.74px;font-size:11.45px;line-height:11.45px;color:#333;">21.35</div>
<div class="t " style="left:396.70px;top:957.37px;font-size:11.45px;line-height:11.45px;color:#333;">2</div>
<div class="t " style="left:482.50px;top:957.37px;font-size:11.45px;line-height:11.45px;color:#333;">2021-06-01 00:02:51.000</div>
<div class="t " style="left:648.70px;top:957.37px;font-size:11.45px;line-height:11.45px;color:#333;">2021-06-01 00:46:39.000</div>
<div class="t " style="left:813.70px;top:957.37px;font-size:11.45px;line-height:11.45px;color:#333;">43</div>
<div class="t " style="left:921.70px;top:957.37px;font-size:11.45px;line-height:11.45px;color:#333;">2</div>
<div class="t " style="left:1049.50px;top:957.37px;font-size:11.45px;line-height:11.45px;color:#333;">13.16</div>
<div class="t " style="left:1155.90px;top:957.37px;font-size:11.45px;line-height:11.45px;color:#333;">Credit card</div>
<div class="t " style="left:1267.50px;top:957.37px;font-size:11.45px;line-height:11.45px;color:#333;">43</div>
<div class="t " style="left:1373.70px;top:957.37px;font-size:11.45px;line-height:11.45px;color:#333;">9.11</div>
<div class="t " style="left:1472.50px;top:957.37px;font-size:11.45px;line-height:11.45px;color:#333;">54.66</div>
<div class="t " style="left:396.70px;top:986.00px;font-size:11.45px;line-height:11.45px;color:#333;">2</div>
<div class="t " style="left:482.50px;top:986.00px;font-size:11.45px;line-height:11.45px;color:#333;">2021-06-01 00:56:04.000</div>
<div class="t " style="left:648.70px;top:986.00px;font-size:11.45px;line-height:11.45px;color:#333;">2021-06-01 01:00:07.000</div>
<div class="t " style="left:813.70px;top:986.00px;font-size:11.45px;line-height:11.45px;color:#333;">4</div>
<div class="t " style="left:921.70px;top:986.00px;font-size:11.45px;line-height:11.45px;color:#333;">2</div>
<div class="t " style="left:1049.50px;top:986.00px;font-size:11.45px;line-height:11.45px;color:#333;">1.17</div>
<div class="t " style="left:1155.90px;top:986.00px;font-size:11.45px;line-height:11.45px;color:#333;">Cash</div>
<div class="t " style="left:1267.50px;top:986.00px;font-size:11.45px;line-height:11.45px;color:#333;">5.5</div>
<div class="t " style="left:1373.70px;top:986.00px;font-size:11.45px;line-height:11.45px;color:#333;">0</div>
<div class="t " style="left:1472.50px;top:986.00px;font-size:11.45px;line-height:11.45px;color:#333;">6.8</div>
<div class="b" style="left:1658px;top:606.3px;width:3px;height:45.5px;background:#8c8c8c;border-radius:2px"></div>
</body></html>
